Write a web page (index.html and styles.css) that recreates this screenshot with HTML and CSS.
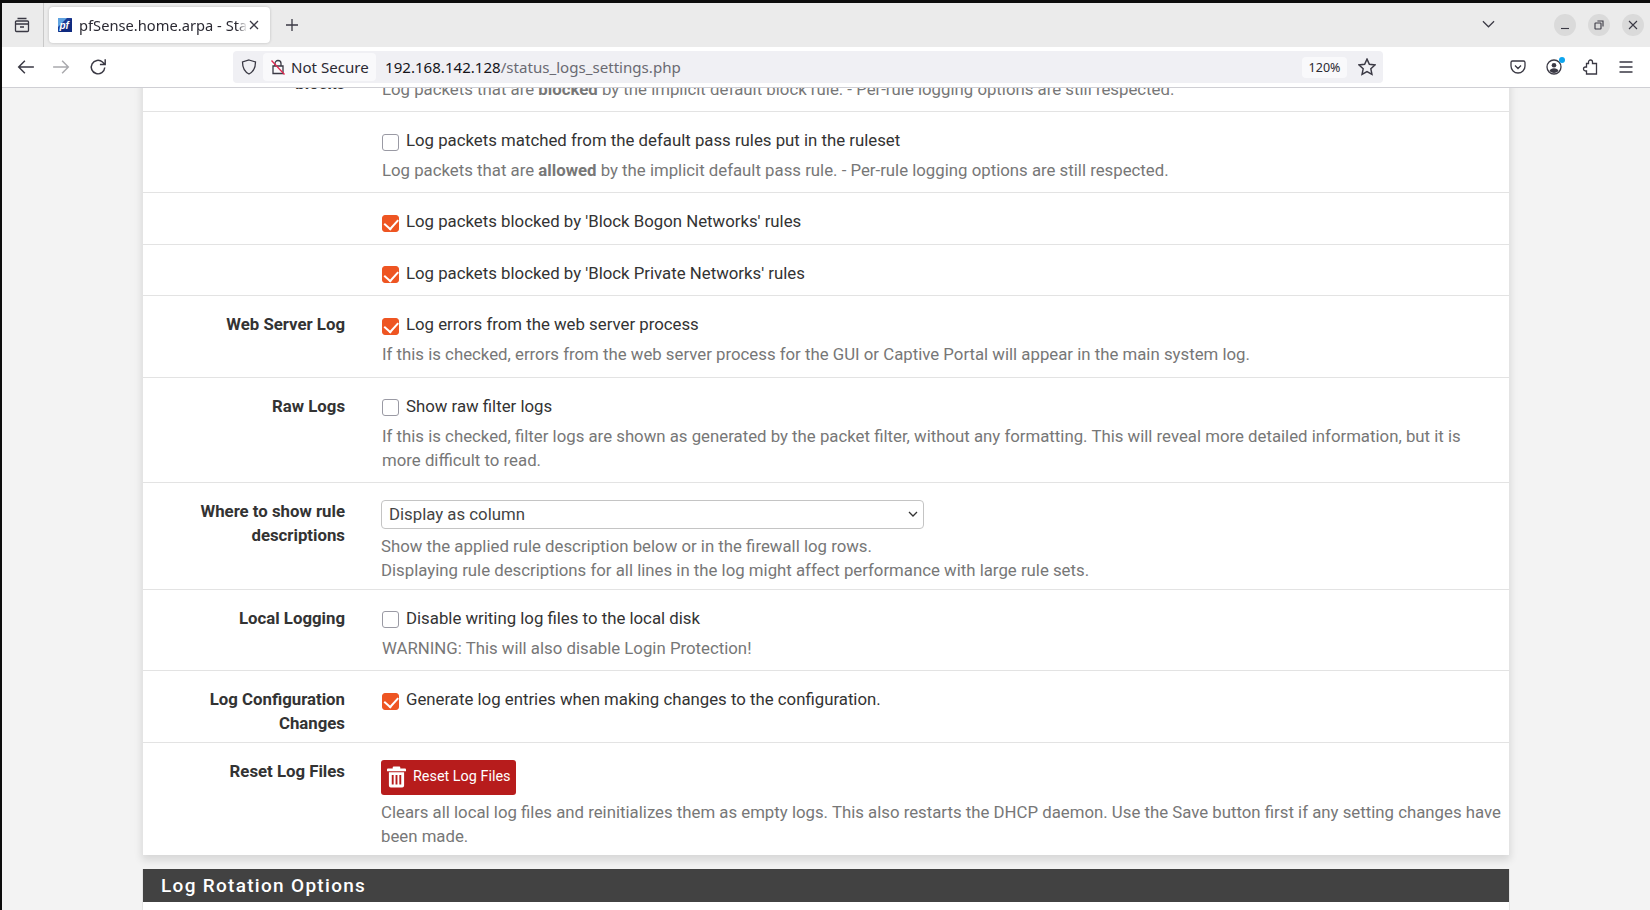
FILE: index.html
```html
<!DOCTYPE html>
<html lang="en">
<head>
<meta charset="utf-8">
<title>pfSense.home.arpa - Status: System Logs: Settings</title>
<link rel="stylesheet" href="styles.css">
</head>
<body>
<div class="window">
  <header class="chrome">
    <div class="tabbar">
      <button class="tab-tool" aria-label="Firefox View">
        <svg class="ico" viewBox="0 0 16 16"><path d="M3.5 1.5h9M2.5 4h11a1 1 0 0 1 1 1v8.500a1 1 0 0 1-1 1h-11a1 1 0 0 1-1-1V5a1 1 0 0 1 1-1zM1.500 7h13M6 10h4"/></svg>
      </button>
      <div class="tab">
        <svg class="favicon" viewBox="0 0 14 14"><rect width="14" height="14" rx="1" fill="#1d3a94"/><path d="M0 14 14 0v14z" fill="#0f2a80"/><path d="M0 0h9L0 9z" fill="#5fa3e0"/><text x="1.400" y="11" class="fav-text">pf</text></svg>
        <span class="tab-title">pfSense.home.arpa - Status: System Logs</span>
        <svg class="tab-x" viewBox="0 0 10 10"><path d="M1 1l8 8M9 1l-8 8"/></svg>
      </div>
      <svg class="plus" viewBox="0 0 14 14"><path d="M7 1v12M1 7h12"/></svg>
      <svg class="list-all" viewBox="0 0 14 8"><path d="M1 1l6 6 6-6"/></svg>
      <div class="win-btns">
        <span class="win-btn"><svg viewBox="0 0 10 10"><path d="M1 8.500h8"/></svg></span>
        <span class="win-btn"><svg viewBox="0 0 10 10"><rect x="1" y="3" width="6" height="6" rx=".6"/><path d="M3.400 1H9v5.600"/></svg></span>
        <span class="win-btn"><svg viewBox="0 0 10 10"><path d="M1 1l8 8M9 1l-8 8"/></svg></span>
      </div>
    </div>
    <nav class="navbar">
      <svg class="ico nav-back" viewBox="0 0 16 16"><path d="M15 8H1.500M7 2.500 1.500 8 7 13.500"/></svg>
      <svg class="ico nav-fwd" viewBox="0 0 16 16"><path d="M1 8h13.500M9 2.500 14.500 8 9 13.500"/></svg>
      <svg class="ico nav-reload" viewBox="0 0 16 16"><path d="M14 8.500A6 6 0 1 1 12 3.600L14 5.500M14.400 1v4.800H9.700"/></svg>
      <div class="urlbar">
        <svg class="ico shield" viewBox="0 0 16 16"><path d="M8 1 14.500 3c0 6-1.500 9.500-6.500 12C3 12.500 1.500 9 1.500 3z"/></svg>
        <div class="secure">
          <svg class="ico lock" viewBox="0 0 16 16"><path d="M5 7V4.500a3 3 0 0 1 6 0V7M3 7h10v7.500H3z"/><path class="slash" d="M1.500 1.500l13 14"/></svg>
          <span>Not Secure</span>
        </div>
        <div class="url"><span class="host">192.168.142.128</span>/status_logs_settings.php</div>
        <span class="zoom-pill">120%</span>
        <svg class="ico star" viewBox="0 0 16 16"><path d="M8 1l2.100 4.600 5 .6-3.700 3.400 1 5L8 12.100 3.600 14.600l1-5L.9 6.200l5-.6z"/></svg>
      </div>
      <div class="nav-right">
        <svg class="ico" viewBox="0 0 16 16"><path d="M2.500 2h11A1.500 1.500 0 0 1 15 3.500V7A7 7 0 0 1 1 7V3.500A1.500 1.500 0 0 1 2.500 2zM5 6.500l3 3 3-3"/></svg>
        <span class="avatar">
          <svg class="ico" viewBox="0 0 16 16"><circle cx="8" cy="8" r="7"/><circle class="solid" cx="8" cy="6.200" r="2.300"/><path class="solid" d="M3.500 12c.5-2 2.500-2.800 4.500-2.800s4 .8 4.500 2.800A6.500 6.500 0 0 1 8 14a6.500 6.500 0 0 1-4.500-2z"/></svg>
          <i class="avatar-dot"></i>
        </span>
        <svg class="ico" viewBox="0 0 16 16"><path d="M6.500 3.500V3a2 2 0 0 1 4 0v1.500h4V15h-10v-3h-1a2 2 0 0 1 0-4h1V4.500h2z"/></svg>
        <svg class="ico" viewBox="0 0 16 16"><path d="M1.500 3h13M1.500 8h13M1.500 13h13"/></svg>
      </div>
    </nav>
  </header>

  <main class="viewport">
    <div class="page">
      <section class="panel">
        <div class="row row-clipped">
          <div class="label">blocks</div>
          <div class="field">
            <p class="help">Log packets that are <b>blocked</b> by the implicit default block rule. - Per-rule logging options are still respected.</p>
          </div>
        </div>
        <div class="row">
          <div class="label"></div>
          <div class="field">
            <label class="check"><input type="checkbox"><span>Log packets matched from the default pass rules put in the ruleset</span></label>
            <p class="help">Log packets that are <b>allowed</b> by the implicit default pass rule. - Per-rule logging options are still respected.</p>
          </div>
        </div>
        <div class="row">
          <div class="label"></div>
          <div class="field">
            <label class="check"><input type="checkbox" checked><span>Log packets blocked by 'Block Bogon Networks' rules</span></label>
          </div>
        </div>
        <div class="row">
          <div class="label"></div>
          <div class="field">
            <label class="check"><input type="checkbox" checked><span>Log packets blocked by 'Block Private Networks' rules</span></label>
          </div>
        </div>
        <div class="row">
          <div class="label">Web Server Log</div>
          <div class="field">
            <label class="check"><input type="checkbox" checked><span>Log errors from the web server process</span></label>
            <p class="help">If this is checked, errors from the web server process for the GUI or Captive Portal will appear in the main system log.</p>
          </div>
        </div>
        <div class="row">
          <div class="label">Raw Logs</div>
          <div class="field">
            <label class="check"><input type="checkbox"><span>Show raw filter logs</span></label>
            <p class="help">If this is checked, filter logs are shown as generated by the packet filter, without any formatting. This will reveal more detailed information, but it is more difficult to read.</p>
          </div>
        </div>
        <div class="row row-select">
          <div class="label">Where to show rule<br>descriptions</div>
          <div class="field field-tight">
            <div class="select-wrap">
              <select class="select" aria-label="Where to show rule descriptions"><option>Display as column</option><option>Display as second row</option><option>Don't display</option></select>
              <svg class="select-chev" viewBox="0 0 10 6"><path d="M1 1l4 4 4-4"/></svg>
            </div>
            <p class="help help-select">Show the applied rule description below or in the firewall log rows.<br>Displaying rule descriptions for all lines in the log might affect performance with large rule sets.</p>
          </div>
        </div>
        <div class="row">
          <div class="label">Local Logging</div>
          <div class="field">
            <label class="check"><input type="checkbox"><span>Disable writing log files to the local disk</span></label>
            <p class="help">WARNING: This will also disable Login Protection!</p>
          </div>
        </div>
        <div class="row row-config">
          <div class="label">Log Configuration<br>Changes</div>
          <div class="field">
            <label class="check"><input type="checkbox" checked><span>Generate log entries when making changes to the configuration.</span></label>
          </div>
        </div>
        <div class="row row-reset">
          <div class="label">Reset Log Files</div>
          <div class="field field-tight">
            <button class="btn-danger">
              <svg class="trash" viewBox="0 0 20 22"><path d="M7 0h6a1 1 0 0 1 1 1v1h5a1 1 0 0 1 1 1v2H0V3a1 1 0 0 1 1-1h5V1a1 1 0 0 1 1-1zM2 6h16v14a2 2 0 0 1-2 2H4a2 2 0 0 1-2-2zm3 3v10h2V9zm4 0v10h2V9zm4 0v10h2V9z"/></svg>
              <span>Reset Log Files</span>
            </button>
            <p class="help help-reset">Clears all local log files and reinitializes them as empty logs. This also restarts the DHCP daemon. Use the Save button first if any setting changes have been made.</p>
          </div>
        </div>
      </section>
      <section class="panel panel-next">
        <h2 class="panel-heading">Log Rotation Options</h2>
        <div class="panel-body"></div>
      </section>
    </div>
  </main>
</div>
</body>
</html>
```

FILE: styles.css
```css
* { box-sizing: border-box; }
html, body { margin: 0; height: 100%; overflow: hidden; }
body { background: #000; font-family: Roboto, "Liberation Sans", sans-serif; }
button { font: inherit; border: 0; background: none; padding: 0; }

.window { height: 910px; padding: 3px 0 0 2px; display: flex; flex-direction: column; background: #0c0c0c; }

/* browser chrome */
.chrome { flex: none; font-family: "Noto Sans", "Open Sans", sans-serif; color: #2b2a33; }
.ico { width: 18px; height: 18px; fill: none; stroke: #3a3944; stroke-width: 1.3; flex: none; }
.ico .solid { fill: #3a3944; stroke: none; }

.tabbar { height: 44px; background: #ebebeb; display: flex; align-items: center; }
.tabbar > * { flex: none; }
.tab-tool { width: 42px; height: 44px; padding-right: 2px; border-right: 1px solid #c9c9c9; display: flex; align-items: center; justify-content: center; }
.tab-tool .ico { width: 16px; height: 16px; }
.tab { width: 221px; height: 36px; margin-left: 5px; background: #fff; border-radius: 4px; box-shadow: 0 0 3px rgba(0,0,0,.2); display: flex; align-items: center; padding-left: 9px; }
.favicon { width: 14px; height: 14px; flex: none; }
.fav-text { font: italic 700 10px "Liberation Sans", sans-serif; fill: #fff; }
.tab-title { flex: none; font-size: 14.7px; margin-left: 7px; width: 168px; white-space: nowrap; overflow: hidden; -webkit-mask-image: linear-gradient(to right, #000 94%, transparent); mask-image: linear-gradient(to right, #000 94%, transparent); }
.tab-x { flex: none; width: 10px; height: 10px; margin-left: 2px; fill: none; stroke: #3a3944; stroke-width: 1.3; }
.plus { width: 14px; height: 14px; margin-left: 15px; fill: none; stroke: #3a3944; stroke-width: 1.3; }
.list-all { width: 13px; height: 8px; margin: -2px 0 0 1182.5px; fill: none; stroke: #3a3944; stroke-width: 1.3; }
.win-btns { display: flex; gap: 12px; margin-left: 59px; }
.win-btn { width: 22px; height: 22px; border-radius: 50%; background: #dadada; display: flex; align-items: center; justify-content: center; }
.win-btn svg { width: 10px; height: 10px; fill: none; stroke: #3a3944; stroke-width: 1.1; }

.navbar { height: 41px; background: #fff; border-bottom: 1px solid #cfcfd4; display: flex; align-items: center; }
.nav-back { margin-left: 15px; }
.nav-fwd { margin-left: 17px; stroke: #a9a9ad; }
.nav-reload { margin-left: 19px; }
.urlbar { flex: none; width: 1150px; height: 32px; margin-left: 126px; background: #f0f0f4; border-radius: 4px; display: flex; align-items: center; padding: 0 7px 0 8px; }
.shield { width: 16px; height: 16px; }
.secure { flex: none; width: 113px; height: 28px; margin-left: 6px; background: #f9f9fb; border-radius: 4px; display: flex; align-items: center; padding-left: 7px; font-size: 15.1px; gap: 5px; white-space: nowrap; }
.lock { width: 16px; height: 16px; }
.lock .slash { stroke: #e22850; }
.url { font-size: 15.1px; color: #6a6a72; margin-left: 9px; flex: 1; white-space: nowrap; }
.host { color: #15141a; }
.zoom-pill { flex: none; width: 45px; height: 21px; background: #f9f9fb; border-radius: 4px; font-size: 12.5px; line-height: 21px; text-align: center; }
.star { margin-left: 11px; }
.nav-right { display: flex; gap: 20px; margin-left: 127px; align-items: center; }
.nav-right .ico { width: 16px; height: 16px; }
.avatar { position: relative; display: flex; }
.avatar-dot { position: absolute; top: -2px; right: -3px; width: 6px; height: 6px; border-radius: 50%; background: #0ea5ee; }

/* page */
.viewport { flex: 1; overflow: hidden; background: #f3f3f3; }
.page { width: 1368px; margin: -57.4px 0 0 140px; }
.panel { background: #fff; border: 1px solid #e4e4e4; border-width: 0 1px; box-shadow: 0 5px 8px rgba(0,0,0,.12); }
.row { display: grid; grid-template-columns: 202px 1fr; column-gap: 37px; padding: 16px 7px 10.4px 0; border-bottom: 1px solid #e3e3e3; font-size: 16.8px; line-height: 24px; }
.row:last-child { border-bottom: 0; }
.row-clipped { padding-top: 40px; }
.label { font-weight: 700; color: #333; text-align: right; }
.row-config .label { margin-bottom: -3.9px; }
.check { display: flex; align-items: flex-start; color: #333; }
.check input { appearance: none; -webkit-appearance: none; width: 17px; height: 17px; margin: 5.6px 7px 0 0; border: 1px solid #9a9aa4; border-radius: 3px; background: #fff; position: relative; flex: none; }
.check input:checked { background: #ee5522; border-color: #ee5522; }
.check input:checked::after { content: ""; position: absolute; left: 4.4px; top: .4px; width: 6.5px; height: 10.5px; border: solid #fff; border-width: 0 2.5px 2.5px 0; transform: rotate(42deg); }
.help { margin: 6px 0 0; color: #777; }
.help b { font-weight: 700; }
.field-tight { margin-left: -1px; padding-top: 1px; }
.select-wrap { position: relative; width: 543px; height: 29px; }
.select { appearance: none; -webkit-appearance: none; width: 100%; height: 100%; border: 1px solid #c4c4c4; border-radius: 4px; background: #fff; padding: 0 7px; font: 16.8px Roboto, "Liberation Sans", sans-serif; color: #444; }
.select-chev { position: absolute; top: 11px; right: 6px; width: 10px; height: 6px; fill: none; stroke: #333; stroke-width: 1.3; pointer-events: none; }
.help-select { margin: 4.7px 0 -3.4px; }
.btn-danger { width: 135px; height: 35px; background: #b71c1c; border-radius: 3px; color: #fff; display: flex; align-items: center; font-size: 14.4px; padding-left: 5.5px; gap: 7.5px; }
.trash { width: 19px; height: 22px; fill: #fff; flex: none; }
.help-reset { margin: 5.7px 0 0; }
.row-reset { padding-bottom: 6.7px; }
.panel-next { margin-top: 14px; box-shadow: none; }
.panel-heading { margin: 0; height: 33.4px; background: #424242; color: #fff; font-size: 19px; font-weight: 500; line-height: 33px; letter-spacing: 1.3px; padding-left: 18px; }
.panel-body { height: 20px; }
```
